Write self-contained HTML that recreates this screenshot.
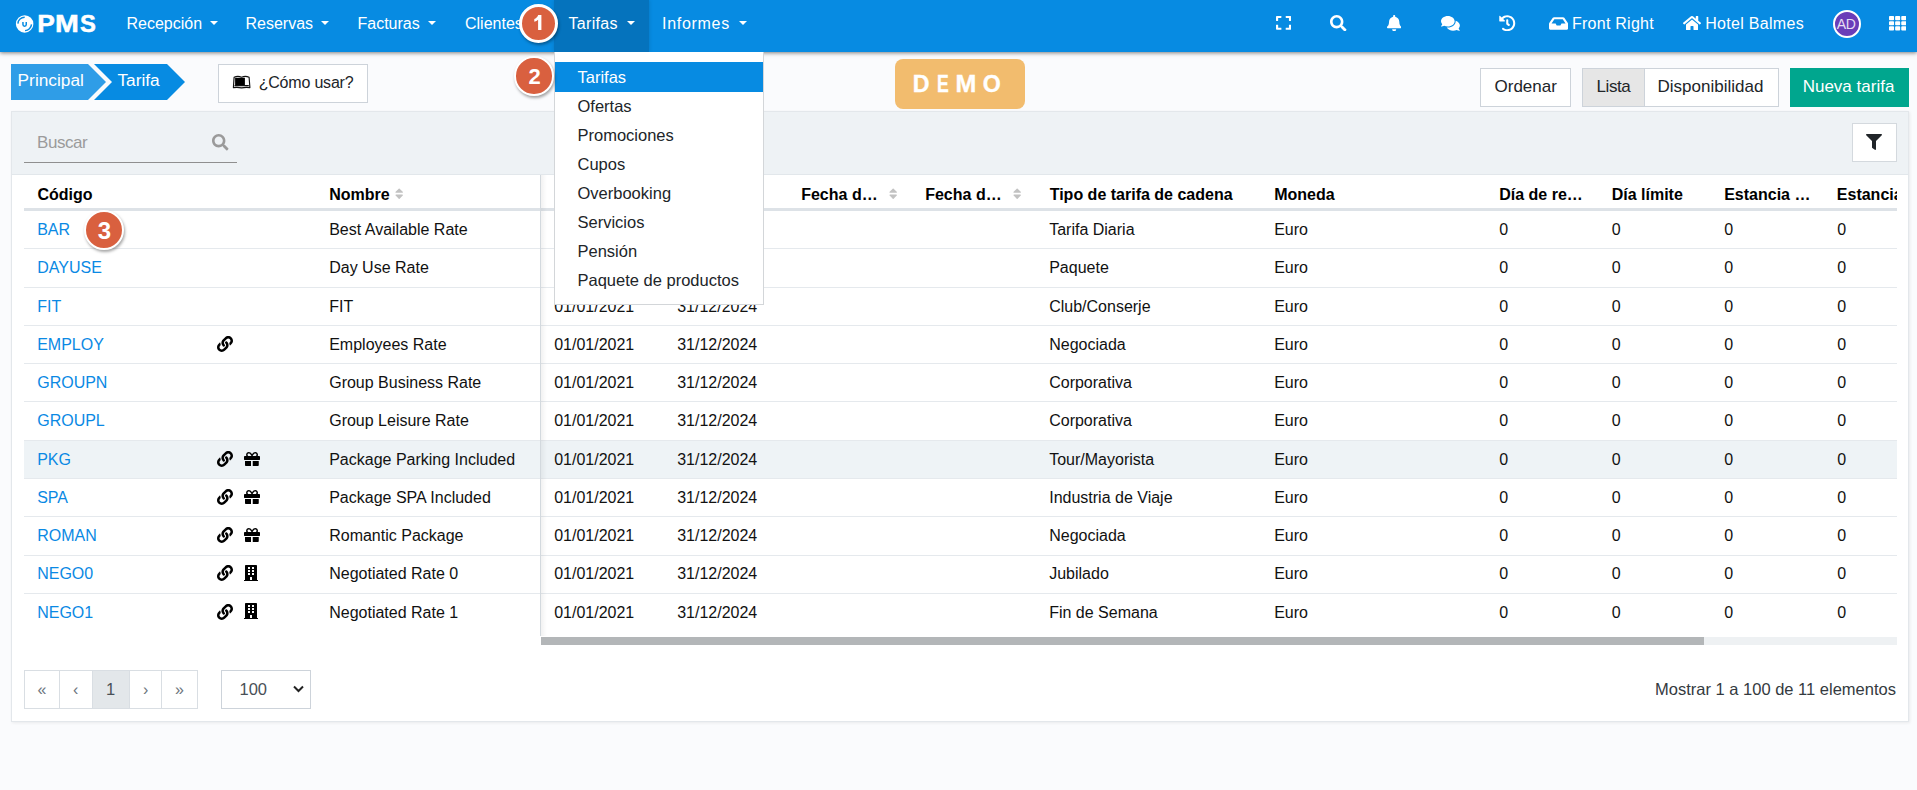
<!DOCTYPE html>
<html><head><meta charset="utf-8"><style>
html,body{margin:0;padding:0}
body{width:1917px;height:790px;overflow:hidden;position:relative;background:#fafbfd;font-family:"Liberation Sans", sans-serif}
.t{position:absolute;white-space:nowrap}
svg{display:block}
</style></head><body>
<div style="position:absolute;left:0;top:0;width:1917px;height:52px;background:#078be2;box-shadow:0 1px 4px rgba(0,0,0,.5)"></div>
<div style="position:absolute;left:554px;top:0;width:95px;height:52px;background:#0573bd;box-shadow:0 0 4px rgba(0,0,0,.15)"></div>
<svg style="position:absolute;left:15px;top:15px" width="19" height="19" viewBox="0 0 19 19">
<circle cx="9.65" cy="8.9" r="8.75" fill="#fff"/>
<path d="M2.9 8.6 A6.75 6.75 0 0 1 9.7 2.2" stroke="#078be2" stroke-width="1.45" fill="none"/>
<path d="M16.5 9.4 A6.75 6.75 0 0 1 10 15.6" stroke="#078be2" stroke-width="1.45" fill="none"/>
<path d="M7.95 6.9 V9.6 A1.65 1.65 0 0 0 11.25 9.6 V6.9" stroke="#078be2" stroke-width="1.5" fill="none"/>
</svg>
<div class="t" style="left:25.6px;top:12.28px;width:40px;text-align:center;font-size:24px;line-height:24px;font-weight:700;color:#fff;-webkit-text-stroke:0.5px #fff;transform:scaleX(1.1)">P</div>
<div class="t" style="left:47.05px;top:12.28px;width:40px;text-align:center;font-size:24px;line-height:24px;font-weight:700;color:#fff;-webkit-text-stroke:0.5px #fff;transform:scaleX(1.19)">M</div>
<div class="t" style="left:67.8px;top:12.28px;width:40px;text-align:center;font-size:24px;line-height:24px;font-weight:700;color:#fff;-webkit-text-stroke:0.5px #fff;transform:scaleX(0.99)">S</div>
<div class="t" style="left:126.50px;top:16.36px;font-size:16px;line-height:16px;color:#fff;font-weight:400;letter-spacing:0px;">Recepción</div>
<div style="position:absolute;left:210px;top:21px;width:0;height:0;border-left:4px solid transparent;border-right:4px solid transparent;border-top:4px solid #fff"></div>
<div class="t" style="left:245.50px;top:16.36px;font-size:16px;line-height:16px;color:#fff;font-weight:400;letter-spacing:0px;">Reservas</div>
<div style="position:absolute;left:321px;top:21px;width:0;height:0;border-left:4px solid transparent;border-right:4px solid transparent;border-top:4px solid #fff"></div>
<div class="t" style="left:357.50px;top:16.36px;font-size:16px;line-height:16px;color:#fff;font-weight:400;letter-spacing:0px;">Facturas</div>
<div style="position:absolute;left:428px;top:21px;width:0;height:0;border-left:4px solid transparent;border-right:4px solid transparent;border-top:4px solid #fff"></div>
<div class="t" style="left:465.00px;top:16.36px;font-size:16px;line-height:16px;color:#fff;font-weight:400;letter-spacing:0px;">Clientes</div>
<div style="position:absolute;left:536px;top:21px;width:0;height:0;border-left:4px solid transparent;border-right:4px solid transparent;border-top:4px solid #fff"></div>
<div class="t" style="left:568.50px;top:16.36px;font-size:16px;line-height:16px;color:#fff;font-weight:400;letter-spacing:0.3px;">Tarifas</div>
<div style="position:absolute;left:627px;top:21px;width:0;height:0;border-left:4px solid transparent;border-right:4px solid transparent;border-top:4px solid #fff"></div>
<div class="t" style="left:662.00px;top:16.36px;font-size:16px;line-height:16px;color:#fff;font-weight:400;letter-spacing:0.7px;">Informes</div>
<div style="position:absolute;left:738.8px;top:21px;width:0;height:0;border-left:4px solid transparent;border-right:4px solid transparent;border-top:4px solid #fff"></div>
<svg style="position:absolute;left:1276.20px;top:15.10px" width="15.10" height="15.77" viewBox="0 0 448 512" preserveAspectRatio="none"><path fill="#fff" d="M0 180V56c0-13.3 10.7-24 24-24h124c6.6 0 12 5.4 12 12v40c0 6.6-5.4 12-12 12H64v84c0 6.6-5.4 12-12 12H12c-6.6 0-12-5.4-12-12zM288 44v40c0 6.6 5.4 12 12 12h84v84c0 6.6 5.4 12 12 12h40c6.6 0 12-5.4 12-12V56c0-13.3-10.7-24-24-24H300c-6.6 0-12 5.4-12 12zm148 276h-40c-6.6 0-12 5.4-12 12v84h-84c-6.6 0-12 5.4-12 12v40c0 6.6 5.4 12 12 12h124c13.3 0 24-10.7 24-24V332c0-6.6-5.4-12-12-12zM160 468v-40c0-6.6-5.4-12-12-12H64v-84c0-6.6-5.4-12-12-12H12c-6.6 0-12 5.4-12 12v124c0 13.3 10.7 24 24 24h124c6.6 0 12-5.4 12-12z"/></svg>
<svg style="position:absolute;left:1330.20px;top:14.80px" width="16.50" height="16.50" viewBox="0 0 512 512"><path fill="#fff" d="M505 442.7L405.3 343c-4.5-4.5-10.6-7-17-7H372c27.6-35.3 44-79.7 44-128C416 93.1 322.9 0 208 0S0 93.1 0 208s93.1 208 208 208c48.3 0 92.7-16.4 128-44v16.3c0 6.4 2.5 12.5 7 17l99.7 99.7c9.4 9.4 24.6 9.4 33.9 0l28.3-28.3c9.4-9.4 9.4-24.6.1-34zM208 336c-70.7 0-128-57.2-128-128 0-70.7 57.2-128 128-128 70.7 0 128 57.2 128 128 0 70.7-57.2 128-128 128z"/></svg>
<svg style="position:absolute;left:1386.50px;top:14.90px" width="14.35" height="16.40" viewBox="0 0 448 512"><path fill="#fff" d="M224 512c35.32 0 63.970-28.65 63.97-64H160.03c0 35.35 28.65 64 63.97 64zm215.39-149.71c-19.32-20.76-55.47-51.99-55.47-154.29 0-77.7-54.48-139.9-127.94-155.16V32c0-17.67-14.32-32-31.98-32s-31.98 14.33-31.98 32v20.84C118.56 68.1 64.08 130.3 64.08 208c0 102.3-36.15 133.53-55.47 154.29-6 6.45-8.66 14.16-8.61 21.71.11 16.4 12.98 32 32.1 32h383.8c19.12 0 32-15.6 32.1-32 .05-7.55-2.61-15.27-8.61-21.71z"/></svg>
<svg style="position:absolute;left:1440.90px;top:14.80px" width="18.90" height="16.80" viewBox="0 0 576 512"><path fill="#fff" d="M416 192c0-88.4-93.1-160-208-160S0 103.6 0 192c0 34.3 14.1 65.9 38 92-13.4 30.2-35.5 54.2-35.8 54.5-2.2 2.3-2.8 5.700-1.5 8.7S4.8 352 8 352c36.6 0 66.9-12.3 88.7-25 32.2 15.7 70.3 25 111.3 25 114.9 0 208-71.6 208-160zm122 220c23.9-26 38-57.7 38-92 0-66.9-53.5-124.2-129.3-148.1.9 6.6 1.3 13.3 1.3 20.1 0 105.9-107.7 192-240 192-10.8 0-21.3-.8-31.7-1.9C207.8 439.6 281.8 480 368 480c41 0 79.1-9.2 111.3-25 21.8 12.7 52.1 25 88.7 25 3.2 0 6.1-1.9 7.3-4.8 1.3-2.9.7-6.300-1.5-8.7-.3-.3-22.4-24.2-35.8-54.5z"/></svg>
<svg style="position:absolute;left:1499.00px;top:14.60px" width="16.50" height="16.50" viewBox="0 0 512 512"><path fill="#fff" d="M504 255.531c.253 136.64-111.18 248.372-247.82 248.468-59.015.042-113.223-20.53-155.822-54.911-11.077-8.94-11.905-25.541-1.839-35.607l11.267-11.267c8.609-8.609 22.353-9.551 31.891-1.984C173.062 425.135 212.781 440 256 440c101.705 0 184-82.311 184-184 0-101.705-82.311-184-184-184-48.814 0-93.149 18.969-126.068 49.932l50.754 50.754c10.08 10.08 2.941 27.314-11.313 27.314H24c-8.837 0-16-7.163-16-16V38.627c0-14.254 17.234-21.393 27.314-11.314l49.372 49.372C129.209 34.136 189.552 8 256 8c136.81 0 247.747 110.78 248 247.531zm-180.912 78.784l9.823-12.63c8.138-10.463 6.253-25.542-4.21-33.679L288 256.349V152c0-13.255-10.745-24-24-24h-16c-13.255 0-24 10.745-24 24v135.651l65.409 50.874c10.463 8.137 25.541 6.253 33.679-4.21z"/></svg>
<svg style="position:absolute;left:1549.00px;top:14.80px" width="19.12" height="17.00" viewBox="0 0 576 512"><path fill="#fff" d="M567.938 243.908L462.25 85.374A48.003 48.003 0 0 0 422.311 64H153.689a48 48 0 0 0-39.938 21.374L8.062 243.908A47.994 47.994 0 0 0 0 270.533V400c0 26.51 21.49 48 48 48h480c26.51 0 48-21.49 48-48V270.533a47.994 47.994 0 0 0-8.062-26.625zM162.252 128h251.497l85.333 128H376l-32 64H232l-32-64H76.918l85.334-128z"/></svg>
<div class="t" style="left:1572.00px;top:16.06px;font-size:16px;line-height:16px;color:#fff;font-weight:400;letter-spacing:0.25px;">Front Right</div>
<svg style="position:absolute;left:1682.60px;top:14.80px" width="18.00" height="16.00" viewBox="0 0 576 512"><path fill="#fff" d="M280.37 148.26L96 300.11V464a16 16 0 0 0 16 16l112.06-.29a16 16 0 0 0 15.92-16V368a16 16 0 0 1 16-16h64a16 16 0 0 1 16 16v95.64a16 16 0 0 0 16 16.05L464 480a16 16 0 0 0 16-16V300L295.67 148.26a12.19 12.19 0 0 0-15.3 0zM571.6 251.47L488 182.56V44.05a12 12 0 0 0-12-12h-56a12 12 0 0 0-12 12v72.61L318.47 43a48 48 0 0 0-61 0L4.340 251.47a12 12 0 0 0-1.6 16.9l25.5 31A12 12 0 0 0 45.15 301l235.22-193.74a12.19 12.19 0 0 1 15.3 0L530.9 301a12 12 0 0 0 16.9-1.6l25.5-31a12 12 0 0 0-1.7-16.93z"/></svg>
<div class="t" style="left:1705.20px;top:16.06px;font-size:16px;line-height:16px;color:#fff;font-weight:400;letter-spacing:0.3px;">Hotel Balmes</div>
<div style="position:absolute;left:1832.5px;top:9.5px;width:24px;height:24px;border:2px solid #fff;border-radius:50%;background:#6a3db8"></div>
<div class="t" style="left:1836.80px;top:17.15px;font-size:14px;line-height:14px;color:#e6dff3;font-weight:400;letter-spacing:-0.5px;">AD</div>
<svg style="position:absolute;left:1889.00px;top:14.80px" width="17.30" height="16.50" viewBox="0 0 512 512" preserveAspectRatio="none"><path fill="#fff" d="M149.333 56v80c0 13.255-10.745 24-24 24H24c-13.255 0-24-10.745-24-24V56c0-13.255 10.745-24 24-24h101.333c13.255 0 24 10.745 24 24zm181.334 240v-80c0-13.255-10.745-24-24-24H205.333c-13.255 0-24 10.745-24 24v80c0 13.255 10.745 24 24 24h101.333c13.256 0 24.001-10.745 24.001-24zm32-240v80c0 13.255 10.745 24 24 24H488c13.255 0 24-10.745 24-24V56c0-13.255-10.745-24-24-24H386.667c-13.255 0-24 10.745-24 24zm-32 80V56c0-13.255-10.745-24-24-24H205.333c-13.255 0-24 10.745-24 24v80c0 13.255 10.745 24 24 24h101.333c13.256 0 24.001-10.745 24.001-24zm-205.334 56H24c-13.255 0-24 10.745-24 24v80c0 13.255 10.745 24 24 24h101.333c13.255 0 24-10.745 24-24v-80c0-13.255-10.745-24-24-24zM0 376v80c0 13.255 10.745 24 24 24h101.333c13.255 0 24-10.745 24-24v-80c0-13.255-10.745-24-24-24H24c-13.255 0-24 10.745-24 24zm386.667-56H488c13.255 0 24-10.745 24-24v-80c0-13.255-10.745-24-24-24H386.667c-13.255 0-24 10.745-24 24v80c0 13.255 10.745 24 24 24zm0 160H488c13.255 0 24-10.745 24-24v-80c0-13.255-10.745-24-24-24H386.667c-13.255 0-24 10.745-24 24v80c0 13.255 10.745 24 24 24zM181.333 376v80c0 13.255 10.745 24 24 24h101.333c13.255 0 24-10.745 24-24v-80c0-13.255-10.745-24-24-24H205.333c-13.255 0-24 10.745-24 24z"/></svg>
<svg style="position:absolute;left:11px;top:64px" width="176" height="36" viewBox="0 0 176 36"><path d="M0 0 H77 L95 18 L77 36 H0 Z" fill="#2f9de7"/><path d="M83 0 H156 L174 18 L156 36 H83 L101 18 Z" fill="#078be2"/></svg>
<div class="t" style="left:17.60px;top:72.26px;font-size:17.3px;line-height:17.3px;color:#fff;font-weight:400;">Principal</div>
<div class="t" style="left:117.40px;top:72.26px;font-size:17.3px;line-height:17.3px;color:#fff;font-weight:400;">Tarifa</div>
<div style="position:absolute;left:218px;top:64px;width:148px;height:36.5px;border:1px solid #cdd3da;background:#fff"></div>
<svg style="position:absolute;left:228px;top:70px" width="28" height="24" viewBox="0 0 28 24">
<rect x="7.1" y="7.8" width="9.8" height="7.2" fill="#000"/>
<path d="M5.4 17.6 L6.1 7.2 Q9.8 5.4 13.6 7.2 Q17.3 5.4 21.1 7.2 L21.9 17.6 Q17.6 16.9 13.6 17.9 Q9.6 16.9 5.4 17.6 Z M6.6 15.6 H20.8" fill="none" stroke="#111" stroke-width="1.15" stroke-linejoin="round"/>
</svg>
<div class="t" style="left:258.70px;top:75.06px;font-size:16px;line-height:16px;color:#212529;font-weight:400;letter-spacing:-0.2px;">¿Cómo usar?</div>
<div style="position:absolute;left:895px;top:59px;width:130px;height:50px;border-radius:8px;background:#f2bc6e"></div>
<div class="t" style="left:901.15px;top:72.76px;width:40px;text-align:center;font-size:23.2px;line-height:23.2px;font-weight:700;color:#fff;-webkit-text-stroke:0.35px #fff;transform:scaleX(1.0)">D</div>
<div class="t" style="left:922.55px;top:72.76px;width:40px;text-align:center;font-size:23.2px;line-height:23.2px;font-weight:700;color:#fff;-webkit-text-stroke:0.35px #fff;transform:scaleX(0.76)">E</div>
<div class="t" style="left:945.9px;top:72.76px;width:40px;text-align:center;font-size:23.2px;line-height:23.2px;font-weight:700;color:#fff;-webkit-text-stroke:0.35px #fff;transform:scaleX(1.08)">M</div>
<div class="t" style="left:971.8px;top:72.76px;width:40px;text-align:center;font-size:23.2px;line-height:23.2px;font-weight:700;color:#fff;-webkit-text-stroke:0.35px #fff;transform:scaleX(1.0)">O</div>
<div style="position:absolute;left:1480px;top:68px;width:89px;height:36.5px;border:1px solid #cdd3da;background:#fff"></div>
<div class="t" style="left:1494.50px;top:77.61px;font-size:17px;line-height:17px;color:#212529;font-weight:400;">Ordenar</div>
<div style="position:absolute;left:1582px;top:68px;width:195px;height:36.5px;border:1px solid #cdd3da;background:#fff"></div>
<div style="position:absolute;left:1583px;top:69px;width:61px;height:36.5px;background:#e6e6e6;border-right:1px solid #cdd3da"></div>
<div class="t" style="left:1596.50px;top:77.61px;font-size:17px;line-height:17px;color:#212529;font-weight:400;letter-spacing:-0.4px;">Lista</div>
<div class="t" style="left:1657.50px;top:77.61px;font-size:17px;line-height:17px;color:#212529;font-weight:400;">Disponibilidad</div>
<div style="position:absolute;left:1790px;top:68px;width:119px;height:39px;background:#00a68e"></div>
<div class="t" style="left:1802.70px;top:77.61px;font-size:17px;line-height:17px;color:#fff;font-weight:400;">Nueva tarifa</div>
<div style="position:absolute;left:11px;top:111px;width:1896px;height:609px;background:#fff;border:1px solid #e3e7eb;box-shadow:1px 1px 3px rgba(0,0,0,.07)"></div>
<div style="position:absolute;left:12px;top:112px;width:1896px;height:63px;background:#eef2f5;border-bottom:1px solid #e2e7eb;box-sizing:border-box"></div>
<div class="t" style="left:37.00px;top:133.91px;font-size:17px;line-height:17px;color:#9b9b9b;font-weight:400;letter-spacing:-0.45px;">Buscar</div>
<div style="position:absolute;left:24px;top:161.5px;width:213px;height:1.5px;background:#8f8f8f"></div>
<svg style="position:absolute;left:212.00px;top:134.00px" width="16.50" height="16.50" viewBox="0 0 512 512"><path fill="#9a9a9a" d="M505 442.7L405.3 343c-4.5-4.5-10.6-7-17-7H372c27.6-35.3 44-79.7 44-128C416 93.1 322.9 0 208 0S0 93.1 0 208s93.1 208 208 208c48.3 0 92.7-16.4 128-44v16.3c0 6.4 2.5 12.5 7 17l99.7 99.7c9.4 9.4 24.6 9.4 33.9 0l28.3-28.3c9.4-9.4 9.4-24.6.1-34zM208 336c-70.7 0-128-57.2-128-128 0-70.7 57.2-128 128-128 70.7 0 128 57.2 128 128 0 70.7-57.2 128-128 128z"/></svg>
<div style="position:absolute;left:1852px;top:123px;width:43px;height:37px;border:1px solid #d4d9de;background:#fff"></div>
<svg style="position:absolute;left:1866.00px;top:134.00px" width="16.00" height="16.00" viewBox="0 0 512 512"><path fill="#212529" d="M487.976 0H24.028C2.71 0-8.047 25.866 7.058 40.971L192 225.941V432c0 7.831 3.821 15.17 10.237 19.662l80 55.98C298.020 518.69 320 507.493 320 487.980V225.941l184.947-184.97C520.021 25.896 509.338 0 487.976 0z"/></svg>
<div style="position:absolute;left:24px;top:208px;width:1873px;height:3px;background:#dde2e7"></div>
<div class="t" style="left:37.40px;top:187.26px;font-size:16px;line-height:16px;color:#000;font-weight:700;">Código</div>
<div class="t" style="left:329.20px;top:187.26px;font-size:16px;line-height:16px;color:#000;font-weight:700;">Nombre</div>
<svg style="position:absolute;left:394.59px;top:186.91px" width="8.38" height="13.40" viewBox="0 0 320 512"><path fill="#c2c2c2" d="M41 288h238c21.4 0 32.1 25.9 17 41L177 448c-9.4 9.4-24.6 9.4-33.9 0L24 329c-15.1-15.1-4.4-41 17-41zm255-105L177 64c-9.4-9.4-24.6-9.4-33.9 0L24 183c-15.1 15.1-4.4 41 17 41h238c21.4 0 32.1-25.9 17-41z"/></svg>
<div class="t" style="left:554.20px;top:187.26px;font-size:16px;line-height:16px;color:#000;font-weight:700;">Fecha d…</div>
<div class="t" style="left:677.20px;top:187.26px;font-size:16px;line-height:16px;color:#000;font-weight:700;">Fecha d…</div>
<div class="t" style="left:801.20px;top:187.26px;font-size:16px;line-height:16px;color:#000;font-weight:700;">Fecha d…</div>
<svg style="position:absolute;left:888.79px;top:186.91px" width="8.38" height="13.40" viewBox="0 0 320 512"><path fill="#c2c2c2" d="M41 288h238c21.4 0 32.1 25.9 17 41L177 448c-9.4 9.4-24.6 9.4-33.9 0L24 329c-15.1-15.1-4.4-41 17-41zm255-105L177 64c-9.4-9.4-24.6-9.4-33.9 0L24 183c-15.1 15.1-4.4 41 17 41h238c21.4 0 32.1-25.9 17-41z"/></svg>
<div class="t" style="left:925.20px;top:187.26px;font-size:16px;line-height:16px;color:#000;font-weight:700;">Fecha d…</div>
<svg style="position:absolute;left:1012.89px;top:186.91px" width="8.38" height="13.40" viewBox="0 0 320 512"><path fill="#c2c2c2" d="M41 288h238c21.4 0 32.1 25.9 17 41L177 448c-9.4 9.4-24.6 9.4-33.9 0L24 329c-15.1-15.1-4.4-41 17-41zm255-105L177 64c-9.4-9.4-24.6-9.4-33.9 0L24 183c-15.1 15.1-4.4 41 17 41h238c21.4 0 32.1-25.9 17-41z"/></svg>
<div class="t" style="left:1049.70px;top:187.26px;font-size:16px;line-height:16px;color:#000;font-weight:700;">Tipo de tarifa de cadena</div>
<div class="t" style="left:1274.20px;top:187.26px;font-size:16px;line-height:16px;color:#000;font-weight:700;">Moneda</div>
<div class="t" style="left:1499.20px;top:187.26px;font-size:16px;line-height:16px;color:#000;font-weight:700;">Día de re…</div>
<div class="t" style="left:1611.70px;top:187.26px;font-size:16px;line-height:16px;color:#000;font-weight:700;">Día límite</div>
<div class="t" style="left:1724.20px;top:187.26px;font-size:16px;line-height:16px;color:#000;font-weight:700;">Estancia …</div>
<div style="position:absolute;left:1837px;top:180px;width:60px;height:28px;overflow:hidden"><div class="t" style="left:-0.20px;top:7.26px;font-size:16px;line-height:16px;color:#000;font-weight:700;">Estancia</div></div>
<div style="position:absolute;left:24px;top:211.00px;width:1873px;height:38.30px;box-sizing:border-box;background:#fff;border-bottom:1px solid #e5e9ed;"></div>
<div class="t" style="left:37.20px;top:222.00px;font-size:16px;line-height:16px;color:#0a89e4;font-weight:400;">BAR</div>
<div class="t" style="left:329.20px;top:222.00px;font-size:16px;line-height:16px;color:#111;font-weight:400;">Best Available Rate</div>
<div class="t" style="left:1049.20px;top:222.00px;font-size:16px;line-height:16px;color:#111;font-weight:400;">Tarifa Diaria</div>
<div class="t" style="left:1274.20px;top:222.00px;font-size:16px;line-height:16px;color:#111;font-weight:400;">Euro</div>
<div class="t" style="left:1499.20px;top:222.00px;font-size:16px;line-height:16px;color:#111;font-weight:400;">0</div>
<div class="t" style="left:1611.70px;top:222.00px;font-size:16px;line-height:16px;color:#111;font-weight:400;">0</div>
<div class="t" style="left:1724.20px;top:222.00px;font-size:16px;line-height:16px;color:#111;font-weight:400;">0</div>
<div class="t" style="left:1837.30px;top:222.00px;font-size:16px;line-height:16px;color:#111;font-weight:400;">0</div>
<div style="position:absolute;left:24px;top:249.30px;width:1873px;height:38.30px;box-sizing:border-box;background:#fff;border-bottom:1px solid #e5e9ed;"></div>
<div class="t" style="left:37.20px;top:260.00px;font-size:16px;line-height:16px;color:#0a89e4;font-weight:400;">DAYUSE</div>
<div class="t" style="left:329.20px;top:260.00px;font-size:16px;line-height:16px;color:#111;font-weight:400;">Day Use Rate</div>
<div class="t" style="left:1049.20px;top:260.00px;font-size:16px;line-height:16px;color:#111;font-weight:400;">Paquete</div>
<div class="t" style="left:1274.20px;top:260.00px;font-size:16px;line-height:16px;color:#111;font-weight:400;">Euro</div>
<div class="t" style="left:1499.20px;top:260.00px;font-size:16px;line-height:16px;color:#111;font-weight:400;">0</div>
<div class="t" style="left:1611.70px;top:260.00px;font-size:16px;line-height:16px;color:#111;font-weight:400;">0</div>
<div class="t" style="left:1724.20px;top:260.00px;font-size:16px;line-height:16px;color:#111;font-weight:400;">0</div>
<div class="t" style="left:1837.30px;top:260.00px;font-size:16px;line-height:16px;color:#111;font-weight:400;">0</div>
<div style="position:absolute;left:24px;top:287.60px;width:1873px;height:38.30px;box-sizing:border-box;background:#fff;border-bottom:1px solid #e5e9ed;"></div>
<div class="t" style="left:37.20px;top:299.00px;font-size:16px;line-height:16px;color:#0a89e4;font-weight:400;">FIT</div>
<div class="t" style="left:329.20px;top:299.00px;font-size:16px;line-height:16px;color:#111;font-weight:400;">FIT</div>
<div class="t" style="left:554.20px;top:299.00px;font-size:16px;line-height:16px;color:#111;font-weight:400;">01/01/2021</div>
<div class="t" style="left:677.20px;top:299.00px;font-size:16px;line-height:16px;color:#111;font-weight:400;">31/12/2024</div>
<div class="t" style="left:1049.20px;top:299.00px;font-size:16px;line-height:16px;color:#111;font-weight:400;">Club/Conserje</div>
<div class="t" style="left:1274.20px;top:299.00px;font-size:16px;line-height:16px;color:#111;font-weight:400;">Euro</div>
<div class="t" style="left:1499.20px;top:299.00px;font-size:16px;line-height:16px;color:#111;font-weight:400;">0</div>
<div class="t" style="left:1611.70px;top:299.00px;font-size:16px;line-height:16px;color:#111;font-weight:400;">0</div>
<div class="t" style="left:1724.20px;top:299.00px;font-size:16px;line-height:16px;color:#111;font-weight:400;">0</div>
<div class="t" style="left:1837.30px;top:299.00px;font-size:16px;line-height:16px;color:#111;font-weight:400;">0</div>
<div style="position:absolute;left:24px;top:325.90px;width:1873px;height:38.30px;box-sizing:border-box;background:#fff;border-bottom:1px solid #e5e9ed;"></div>
<div class="t" style="left:37.20px;top:337.00px;font-size:16px;line-height:16px;color:#0a89e4;font-weight:400;">EMPLOY</div>
<svg style="position:absolute;left:217.00px;top:335.60px" width="16.00" height="16.00" viewBox="0 0 512 512"><path fill="#000" d="M326.612 185.391c59.747 59.809 58.927 155.698.36 214.59-.11.12-.24.25-.36.37l-67.2 67.2c-59.27 59.27-155.699 59.262-214.96 0-59.27-59.26-59.27-155.7 0-214.96l37.106-37.106c9.84-9.84 26.786-3.3 27.294 10.606.648 17.722 3.826 35.527 9.69 52.721 1.986 5.822.567 12.262-3.783 16.612l-13.087 13.087c-28.026 28.026-28.905 73.66-1.155 101.96 28.024 28.579 74.086 28.749 102.325.51l67.2-67.19c28.191-28.191 28.073-73.757 0-101.83-3.701-3.694-7.429-6.564-10.341-8.569a16.037 16.037 0 0 1-6.947-12.606c-.396-10.567 3.348-21.456 11.698-29.806l21.054-21.055c5.521-5.521 14.182-6.199 20.584-1.731a152.482 152.482 0 0 1 20.522 17.197zM467.547 44.449c-59.261-59.262-155.69-59.27-214.96 0l-67.2 67.2c-.12.12-.25.25-.36.37-58.566 58.892-59.387 154.781.36 214.59a152.454 152.454 0 0 0 20.521 17.196c6.402 4.468 15.064 3.789 20.584-1.731l21.054-21.055c8.35-8.35 12.094-19.239 11.698-29.806a16.037 16.037 0 0 0-6.947-12.606c-2.912-2.005-6.64-4.875-10.341-8.569-28.073-28.073-28.191-73.639 0-101.83l67.2-67.19c28.239-28.239 74.3-28.069 102.325.51 27.75 28.3 26.872 73.934-1.155 101.96l-13.087 13.087c-4.35 4.35-5.769 10.79-3.783 16.612 5.864 17.194 9.042 34.999 9.69 52.721.509 13.906 17.454 20.446 27.294 10.606l37.106-37.106c59.271-59.259 59.271-155.699.001-214.959z"/></svg>
<div class="t" style="left:329.20px;top:337.00px;font-size:16px;line-height:16px;color:#111;font-weight:400;">Employees Rate</div>
<div class="t" style="left:554.20px;top:337.00px;font-size:16px;line-height:16px;color:#111;font-weight:400;">01/01/2021</div>
<div class="t" style="left:677.20px;top:337.00px;font-size:16px;line-height:16px;color:#111;font-weight:400;">31/12/2024</div>
<div class="t" style="left:1049.20px;top:337.00px;font-size:16px;line-height:16px;color:#111;font-weight:400;">Negociada</div>
<div class="t" style="left:1274.20px;top:337.00px;font-size:16px;line-height:16px;color:#111;font-weight:400;">Euro</div>
<div class="t" style="left:1499.20px;top:337.00px;font-size:16px;line-height:16px;color:#111;font-weight:400;">0</div>
<div class="t" style="left:1611.70px;top:337.00px;font-size:16px;line-height:16px;color:#111;font-weight:400;">0</div>
<div class="t" style="left:1724.20px;top:337.00px;font-size:16px;line-height:16px;color:#111;font-weight:400;">0</div>
<div class="t" style="left:1837.30px;top:337.00px;font-size:16px;line-height:16px;color:#111;font-weight:400;">0</div>
<div style="position:absolute;left:24px;top:364.20px;width:1873px;height:38.30px;box-sizing:border-box;background:#fff;border-bottom:1px solid #e5e9ed;"></div>
<div class="t" style="left:37.20px;top:375.00px;font-size:16px;line-height:16px;color:#0a89e4;font-weight:400;">GROUPN</div>
<div class="t" style="left:329.20px;top:375.00px;font-size:16px;line-height:16px;color:#111;font-weight:400;">Group Business Rate</div>
<div class="t" style="left:554.20px;top:375.00px;font-size:16px;line-height:16px;color:#111;font-weight:400;">01/01/2021</div>
<div class="t" style="left:677.20px;top:375.00px;font-size:16px;line-height:16px;color:#111;font-weight:400;">31/12/2024</div>
<div class="t" style="left:1049.20px;top:375.00px;font-size:16px;line-height:16px;color:#111;font-weight:400;">Corporativa</div>
<div class="t" style="left:1274.20px;top:375.00px;font-size:16px;line-height:16px;color:#111;font-weight:400;">Euro</div>
<div class="t" style="left:1499.20px;top:375.00px;font-size:16px;line-height:16px;color:#111;font-weight:400;">0</div>
<div class="t" style="left:1611.70px;top:375.00px;font-size:16px;line-height:16px;color:#111;font-weight:400;">0</div>
<div class="t" style="left:1724.20px;top:375.00px;font-size:16px;line-height:16px;color:#111;font-weight:400;">0</div>
<div class="t" style="left:1837.30px;top:375.00px;font-size:16px;line-height:16px;color:#111;font-weight:400;">0</div>
<div style="position:absolute;left:24px;top:402.50px;width:1873px;height:38.30px;box-sizing:border-box;background:#fff;border-bottom:1px solid #e5e9ed;"></div>
<div class="t" style="left:37.20px;top:413.00px;font-size:16px;line-height:16px;color:#0a89e4;font-weight:400;">GROUPL</div>
<div class="t" style="left:329.20px;top:413.00px;font-size:16px;line-height:16px;color:#111;font-weight:400;">Group Leisure Rate</div>
<div class="t" style="left:554.20px;top:413.00px;font-size:16px;line-height:16px;color:#111;font-weight:400;">01/01/2021</div>
<div class="t" style="left:677.20px;top:413.00px;font-size:16px;line-height:16px;color:#111;font-weight:400;">31/12/2024</div>
<div class="t" style="left:1049.20px;top:413.00px;font-size:16px;line-height:16px;color:#111;font-weight:400;">Corporativa</div>
<div class="t" style="left:1274.20px;top:413.00px;font-size:16px;line-height:16px;color:#111;font-weight:400;">Euro</div>
<div class="t" style="left:1499.20px;top:413.00px;font-size:16px;line-height:16px;color:#111;font-weight:400;">0</div>
<div class="t" style="left:1611.70px;top:413.00px;font-size:16px;line-height:16px;color:#111;font-weight:400;">0</div>
<div class="t" style="left:1724.20px;top:413.00px;font-size:16px;line-height:16px;color:#111;font-weight:400;">0</div>
<div class="t" style="left:1837.30px;top:413.00px;font-size:16px;line-height:16px;color:#111;font-weight:400;">0</div>
<div style="position:absolute;left:24px;top:440.80px;width:1873px;height:38.30px;box-sizing:border-box;background:#eef3f6;border-bottom:1px solid #e5e9ed;"></div>
<div class="t" style="left:37.20px;top:452.00px;font-size:16px;line-height:16px;color:#0a89e4;font-weight:400;">PKG</div>
<svg style="position:absolute;left:217.00px;top:450.50px" width="16.00" height="16.00" viewBox="0 0 512 512"><path fill="#000" d="M326.612 185.391c59.747 59.809 58.927 155.698.36 214.59-.11.12-.24.25-.36.37l-67.2 67.2c-59.27 59.27-155.699 59.262-214.96 0-59.27-59.26-59.27-155.7 0-214.96l37.106-37.106c9.84-9.84 26.786-3.3 27.294 10.606.648 17.722 3.826 35.527 9.69 52.721 1.986 5.822.567 12.262-3.783 16.612l-13.087 13.087c-28.026 28.026-28.905 73.66-1.155 101.96 28.024 28.579 74.086 28.749 102.325.51l67.2-67.19c28.191-28.191 28.073-73.757 0-101.83-3.701-3.694-7.429-6.564-10.341-8.569a16.037 16.037 0 0 1-6.947-12.606c-.396-10.567 3.348-21.456 11.698-29.806l21.054-21.055c5.521-5.521 14.182-6.199 20.584-1.731a152.482 152.482 0 0 1 20.522 17.197zM467.547 44.449c-59.261-59.262-155.69-59.27-214.96 0l-67.2 67.2c-.12.12-.25.25-.36.37-58.566 58.892-59.387 154.781.36 214.59a152.454 152.454 0 0 0 20.521 17.196c6.402 4.468 15.064 3.789 20.584-1.731l21.054-21.055c8.35-8.35 12.094-19.239 11.698-29.806a16.037 16.037 0 0 0-6.947-12.606c-2.912-2.005-6.64-4.875-10.341-8.569-28.073-28.073-28.191-73.639 0-101.83l67.2-67.19c28.239-28.239 74.3-28.069 102.325.51 27.75 28.3 26.872 73.934-1.155 101.96l-13.087 13.087c-4.35 4.35-5.769 10.79-3.783 16.612 5.864 17.194 9.042 34.999 9.69 52.721.509 13.906 17.454 20.446 27.294 10.606l37.106-37.106c59.271-59.259 59.271-155.699.001-214.959z"/></svg>
<svg style="position:absolute;left:244.00px;top:450.60px" width="16.00" height="16.00" viewBox="0 0 512 512"><path fill="#000" d="M32 448c0 17.7 14.3 32 32 32h160V320H32v128zm448-288h-42.1c6.2-12.1 10.1-25.5 10.1-40 0-48.5-39.5-88-88-88-41.6 0-68.5 21.3-103 68.3-34.5-47-61.4-68.3-103-68.3-48.5 0-88 39.5-88 88 0 14.5 3.8 27.9 10.1 40H32c-17.7 0-32 14.3-32 32v80c0 8.8 7.2 16 16 16h480c8.8 0 16-7.2 16-16v-80c0-17.7-14.3-32-32-32zm-326.1 0c-22.1 0-40-17.9-40-40s17.9-40 40-40c19.9 0 34.6 3.3 86.1 80h-86.1zm206.1 0h-86.1c51.4-76.5 65.7-80 86.1-80 22.1 0 40 17.9 40 40s-17.9 40-40 40zM280 480h160c17.7 0 32-14.3 32-32V320H280v160z"/></svg>
<div class="t" style="left:329.20px;top:452.00px;font-size:16px;line-height:16px;color:#111;font-weight:400;">Package Parking Included</div>
<div class="t" style="left:554.20px;top:452.00px;font-size:16px;line-height:16px;color:#111;font-weight:400;">01/01/2021</div>
<div class="t" style="left:677.20px;top:452.00px;font-size:16px;line-height:16px;color:#111;font-weight:400;">31/12/2024</div>
<div class="t" style="left:1049.20px;top:452.00px;font-size:16px;line-height:16px;color:#111;font-weight:400;">Tour/Mayorista</div>
<div class="t" style="left:1274.20px;top:452.00px;font-size:16px;line-height:16px;color:#111;font-weight:400;">Euro</div>
<div class="t" style="left:1499.20px;top:452.00px;font-size:16px;line-height:16px;color:#111;font-weight:400;">0</div>
<div class="t" style="left:1611.70px;top:452.00px;font-size:16px;line-height:16px;color:#111;font-weight:400;">0</div>
<div class="t" style="left:1724.20px;top:452.00px;font-size:16px;line-height:16px;color:#111;font-weight:400;">0</div>
<div class="t" style="left:1837.30px;top:452.00px;font-size:16px;line-height:16px;color:#111;font-weight:400;">0</div>
<div style="position:absolute;left:24px;top:479.10px;width:1873px;height:38.30px;box-sizing:border-box;background:#fff;border-bottom:1px solid #e5e9ed;"></div>
<div class="t" style="left:37.20px;top:490.00px;font-size:16px;line-height:16px;color:#0a89e4;font-weight:400;">SPA</div>
<svg style="position:absolute;left:217.00px;top:488.80px" width="16.00" height="16.00" viewBox="0 0 512 512"><path fill="#000" d="M326.612 185.391c59.747 59.809 58.927 155.698.36 214.59-.11.12-.24.25-.36.37l-67.2 67.2c-59.27 59.27-155.699 59.262-214.96 0-59.27-59.26-59.27-155.7 0-214.96l37.106-37.106c9.84-9.84 26.786-3.3 27.294 10.606.648 17.722 3.826 35.527 9.69 52.721 1.986 5.822.567 12.262-3.783 16.612l-13.087 13.087c-28.026 28.026-28.905 73.66-1.155 101.96 28.024 28.579 74.086 28.749 102.325.51l67.2-67.19c28.191-28.191 28.073-73.757 0-101.83-3.701-3.694-7.429-6.564-10.341-8.569a16.037 16.037 0 0 1-6.947-12.606c-.396-10.567 3.348-21.456 11.698-29.806l21.054-21.055c5.521-5.521 14.182-6.199 20.584-1.731a152.482 152.482 0 0 1 20.522 17.197zM467.547 44.449c-59.261-59.262-155.69-59.27-214.96 0l-67.2 67.2c-.12.12-.25.25-.36.37-58.566 58.892-59.387 154.781.36 214.59a152.454 152.454 0 0 0 20.521 17.196c6.402 4.468 15.064 3.789 20.584-1.731l21.054-21.055c8.35-8.35 12.094-19.239 11.698-29.806a16.037 16.037 0 0 0-6.947-12.606c-2.912-2.005-6.64-4.875-10.341-8.569-28.073-28.073-28.191-73.639 0-101.83l67.2-67.19c28.239-28.239 74.3-28.069 102.325.51 27.75 28.3 26.872 73.934-1.155 101.96l-13.087 13.087c-4.35 4.35-5.769 10.79-3.783 16.612 5.864 17.194 9.042 34.999 9.69 52.721.509 13.906 17.454 20.446 27.294 10.606l37.106-37.106c59.271-59.259 59.271-155.699.001-214.959z"/></svg>
<svg style="position:absolute;left:244.00px;top:488.90px" width="16.00" height="16.00" viewBox="0 0 512 512"><path fill="#000" d="M32 448c0 17.7 14.3 32 32 32h160V320H32v128zm448-288h-42.1c6.2-12.1 10.1-25.5 10.1-40 0-48.5-39.5-88-88-88-41.6 0-68.5 21.3-103 68.3-34.5-47-61.4-68.3-103-68.3-48.5 0-88 39.5-88 88 0 14.5 3.8 27.9 10.1 40H32c-17.7 0-32 14.3-32 32v80c0 8.8 7.2 16 16 16h480c8.8 0 16-7.2 16-16v-80c0-17.7-14.3-32-32-32zm-326.1 0c-22.1 0-40-17.9-40-40s17.9-40 40-40c19.9 0 34.6 3.3 86.1 80h-86.1zm206.1 0h-86.1c51.4-76.5 65.7-80 86.1-80 22.1 0 40 17.9 40 40s-17.9 40-40 40zM280 480h160c17.7 0 32-14.3 32-32V320H280v160z"/></svg>
<div class="t" style="left:329.20px;top:490.00px;font-size:16px;line-height:16px;color:#111;font-weight:400;">Package SPA Included</div>
<div class="t" style="left:554.20px;top:490.00px;font-size:16px;line-height:16px;color:#111;font-weight:400;">01/01/2021</div>
<div class="t" style="left:677.20px;top:490.00px;font-size:16px;line-height:16px;color:#111;font-weight:400;">31/12/2024</div>
<div class="t" style="left:1049.20px;top:490.00px;font-size:16px;line-height:16px;color:#111;font-weight:400;">Industria de Viaje</div>
<div class="t" style="left:1274.20px;top:490.00px;font-size:16px;line-height:16px;color:#111;font-weight:400;">Euro</div>
<div class="t" style="left:1499.20px;top:490.00px;font-size:16px;line-height:16px;color:#111;font-weight:400;">0</div>
<div class="t" style="left:1611.70px;top:490.00px;font-size:16px;line-height:16px;color:#111;font-weight:400;">0</div>
<div class="t" style="left:1724.20px;top:490.00px;font-size:16px;line-height:16px;color:#111;font-weight:400;">0</div>
<div class="t" style="left:1837.30px;top:490.00px;font-size:16px;line-height:16px;color:#111;font-weight:400;">0</div>
<div style="position:absolute;left:24px;top:517.40px;width:1873px;height:38.30px;box-sizing:border-box;background:#fff;border-bottom:1px solid #e5e9ed;"></div>
<div class="t" style="left:37.20px;top:528.00px;font-size:16px;line-height:16px;color:#0a89e4;font-weight:400;">ROMAN</div>
<svg style="position:absolute;left:217.00px;top:527.10px" width="16.00" height="16.00" viewBox="0 0 512 512"><path fill="#000" d="M326.612 185.391c59.747 59.809 58.927 155.698.36 214.59-.11.12-.24.25-.36.37l-67.2 67.2c-59.27 59.27-155.699 59.262-214.96 0-59.27-59.26-59.27-155.7 0-214.96l37.106-37.106c9.84-9.84 26.786-3.3 27.294 10.606.648 17.722 3.826 35.527 9.69 52.721 1.986 5.822.567 12.262-3.783 16.612l-13.087 13.087c-28.026 28.026-28.905 73.66-1.155 101.96 28.024 28.579 74.086 28.749 102.325.51l67.2-67.19c28.191-28.191 28.073-73.757 0-101.83-3.701-3.694-7.429-6.564-10.341-8.569a16.037 16.037 0 0 1-6.947-12.606c-.396-10.567 3.348-21.456 11.698-29.806l21.054-21.055c5.521-5.521 14.182-6.199 20.584-1.731a152.482 152.482 0 0 1 20.522 17.197zM467.547 44.449c-59.261-59.262-155.69-59.27-214.96 0l-67.2 67.2c-.12.12-.25.25-.36.37-58.566 58.892-59.387 154.781.36 214.59a152.454 152.454 0 0 0 20.521 17.196c6.402 4.468 15.064 3.789 20.584-1.731l21.054-21.055c8.35-8.35 12.094-19.239 11.698-29.806a16.037 16.037 0 0 0-6.947-12.606c-2.912-2.005-6.64-4.875-10.341-8.569-28.073-28.073-28.191-73.639 0-101.83l67.2-67.19c28.239-28.239 74.3-28.069 102.325.51 27.75 28.3 26.872 73.934-1.155 101.96l-13.087 13.087c-4.35 4.35-5.769 10.79-3.783 16.612 5.864 17.194 9.042 34.999 9.69 52.721.509 13.906 17.454 20.446 27.294 10.606l37.106-37.106c59.271-59.259 59.271-155.699.001-214.959z"/></svg>
<svg style="position:absolute;left:244.00px;top:527.20px" width="16.00" height="16.00" viewBox="0 0 512 512"><path fill="#000" d="M32 448c0 17.7 14.3 32 32 32h160V320H32v128zm448-288h-42.1c6.2-12.1 10.1-25.5 10.1-40 0-48.5-39.5-88-88-88-41.6 0-68.5 21.3-103 68.3-34.5-47-61.4-68.3-103-68.3-48.5 0-88 39.5-88 88 0 14.5 3.8 27.9 10.1 40H32c-17.7 0-32 14.3-32 32v80c0 8.8 7.2 16 16 16h480c8.8 0 16-7.2 16-16v-80c0-17.7-14.3-32-32-32zm-326.1 0c-22.1 0-40-17.9-40-40s17.9-40 40-40c19.9 0 34.6 3.3 86.1 80h-86.1zm206.1 0h-86.1c51.4-76.5 65.7-80 86.1-80 22.1 0 40 17.9 40 40s-17.9 40-40 40zM280 480h160c17.7 0 32-14.3 32-32V320H280v160z"/></svg>
<div class="t" style="left:329.20px;top:528.00px;font-size:16px;line-height:16px;color:#111;font-weight:400;">Romantic Package</div>
<div class="t" style="left:554.20px;top:528.00px;font-size:16px;line-height:16px;color:#111;font-weight:400;">01/01/2021</div>
<div class="t" style="left:677.20px;top:528.00px;font-size:16px;line-height:16px;color:#111;font-weight:400;">31/12/2024</div>
<div class="t" style="left:1049.20px;top:528.00px;font-size:16px;line-height:16px;color:#111;font-weight:400;">Negociada</div>
<div class="t" style="left:1274.20px;top:528.00px;font-size:16px;line-height:16px;color:#111;font-weight:400;">Euro</div>
<div class="t" style="left:1499.20px;top:528.00px;font-size:16px;line-height:16px;color:#111;font-weight:400;">0</div>
<div class="t" style="left:1611.70px;top:528.00px;font-size:16px;line-height:16px;color:#111;font-weight:400;">0</div>
<div class="t" style="left:1724.20px;top:528.00px;font-size:16px;line-height:16px;color:#111;font-weight:400;">0</div>
<div class="t" style="left:1837.30px;top:528.00px;font-size:16px;line-height:16px;color:#111;font-weight:400;">0</div>
<div style="position:absolute;left:24px;top:555.70px;width:1873px;height:38.30px;box-sizing:border-box;background:#fff;border-bottom:1px solid #e5e9ed;"></div>
<div class="t" style="left:37.20px;top:566.00px;font-size:16px;line-height:16px;color:#0a89e4;font-weight:400;">NEGO0</div>
<svg style="position:absolute;left:217.00px;top:565.40px" width="16.00" height="16.00" viewBox="0 0 512 512"><path fill="#000" d="M326.612 185.391c59.747 59.809 58.927 155.698.36 214.59-.11.12-.24.25-.36.37l-67.2 67.2c-59.27 59.27-155.699 59.262-214.96 0-59.27-59.26-59.27-155.7 0-214.96l37.106-37.106c9.84-9.84 26.786-3.3 27.294 10.606.648 17.722 3.826 35.527 9.69 52.721 1.986 5.822.567 12.262-3.783 16.612l-13.087 13.087c-28.026 28.026-28.905 73.66-1.155 101.96 28.024 28.579 74.086 28.749 102.325.51l67.2-67.19c28.191-28.191 28.073-73.757 0-101.83-3.701-3.694-7.429-6.564-10.341-8.569a16.037 16.037 0 0 1-6.947-12.606c-.396-10.567 3.348-21.456 11.698-29.806l21.054-21.055c5.521-5.521 14.182-6.199 20.584-1.731a152.482 152.482 0 0 1 20.522 17.197zM467.547 44.449c-59.261-59.262-155.69-59.27-214.96 0l-67.2 67.2c-.12.12-.25.25-.36.37-58.566 58.892-59.387 154.781.36 214.59a152.454 152.454 0 0 0 20.521 17.196c6.402 4.468 15.064 3.789 20.584-1.731l21.054-21.055c8.35-8.35 12.094-19.239 11.698-29.806a16.037 16.037 0 0 0-6.947-12.606c-2.912-2.005-6.64-4.875-10.341-8.569-28.073-28.073-28.191-73.639 0-101.83l67.2-67.19c28.239-28.239 74.3-28.069 102.325.51 27.75 28.3 26.872 73.934-1.155 101.96l-13.087 13.087c-4.35 4.35-5.769 10.79-3.783 16.612 5.864 17.194 9.042 34.999 9.69 52.721.509 13.906 17.454 20.446 27.294 10.606l37.106-37.106c59.271-59.259 59.271-155.699.001-214.959z"/></svg>
<svg style="position:absolute;left:244.00px;top:565.00px" width="14.00" height="16.00" viewBox="0 0 448 512"><path fill="#000" d="M436 480h-20V24c0-13.255-10.745-24-24-24H56C42.745 0 32 10.745 32 24v456H12c-6.627 0-12 5.373-12 12v20h448v-20c0-6.627-5.373-12-12-12zM128 76c0-6.627 5.373-12 12-12h40c6.627 0 12 5.373 12 12v40c0 6.627-5.373 12-12 12h-40c-6.627 0-12-5.373-12-12V76zm0 96c0-6.627 5.373-12 12-12h40c6.627 0 12 5.373 12 12v40c0 6.627-5.373 12-12 12h-40c-6.627 0-12-5.373-12-12v-40zm52 148h-40c-6.627 0-12-5.373-12-12v-40c0-6.627 5.373-12 12-12h40c6.627 0 12 5.373 12 12v40c0 6.627-5.373 12-12 12zm76 160h-64v-84c0-6.627 5.373-12 12-12h40c6.627 0 12 5.373 12 12v84zm64-172c0 6.627-5.373 12-12 12h-40c-6.627 0-12-5.373-12-12v-40c0-6.627 5.373-12 12-12h40c6.627 0 12 5.373 12 12v40zm0-96c0 6.627-5.373 12-12 12h-40c-6.627 0-12-5.373-12-12v-40c0-6.627 5.373-12 12-12h40c6.627 0 12 5.373 12 12v40zm0-96c0 6.627-5.373 12-12 12h-40c-6.627 0-12-5.373-12-12V76c0-6.627 5.373-12 12-12h40c6.627 0 12 5.373 12 12v40z"/></svg>
<div class="t" style="left:329.20px;top:566.00px;font-size:16px;line-height:16px;color:#111;font-weight:400;">Negotiated Rate 0</div>
<div class="t" style="left:554.20px;top:566.00px;font-size:16px;line-height:16px;color:#111;font-weight:400;">01/01/2021</div>
<div class="t" style="left:677.20px;top:566.00px;font-size:16px;line-height:16px;color:#111;font-weight:400;">31/12/2024</div>
<div class="t" style="left:1049.20px;top:566.00px;font-size:16px;line-height:16px;color:#111;font-weight:400;">Jubilado</div>
<div class="t" style="left:1274.20px;top:566.00px;font-size:16px;line-height:16px;color:#111;font-weight:400;">Euro</div>
<div class="t" style="left:1499.20px;top:566.00px;font-size:16px;line-height:16px;color:#111;font-weight:400;">0</div>
<div class="t" style="left:1611.70px;top:566.00px;font-size:16px;line-height:16px;color:#111;font-weight:400;">0</div>
<div class="t" style="left:1724.20px;top:566.00px;font-size:16px;line-height:16px;color:#111;font-weight:400;">0</div>
<div class="t" style="left:1837.30px;top:566.00px;font-size:16px;line-height:16px;color:#111;font-weight:400;">0</div>
<div style="position:absolute;left:24px;top:594.00px;width:1873px;height:38.30px;box-sizing:border-box;background:#fff;"></div>
<div class="t" style="left:37.20px;top:605.00px;font-size:16px;line-height:16px;color:#0a89e4;font-weight:400;">NEGO1</div>
<svg style="position:absolute;left:217.00px;top:603.70px" width="16.00" height="16.00" viewBox="0 0 512 512"><path fill="#000" d="M326.612 185.391c59.747 59.809 58.927 155.698.36 214.59-.11.12-.24.25-.36.37l-67.2 67.2c-59.27 59.27-155.699 59.262-214.96 0-59.27-59.26-59.27-155.7 0-214.96l37.106-37.106c9.84-9.84 26.786-3.3 27.294 10.606.648 17.722 3.826 35.527 9.69 52.721 1.986 5.822.567 12.262-3.783 16.612l-13.087 13.087c-28.026 28.026-28.905 73.66-1.155 101.96 28.024 28.579 74.086 28.749 102.325.51l67.2-67.19c28.191-28.191 28.073-73.757 0-101.83-3.701-3.694-7.429-6.564-10.341-8.569a16.037 16.037 0 0 1-6.947-12.606c-.396-10.567 3.348-21.456 11.698-29.806l21.054-21.055c5.521-5.521 14.182-6.199 20.584-1.731a152.482 152.482 0 0 1 20.522 17.197zM467.547 44.449c-59.261-59.262-155.69-59.27-214.96 0l-67.2 67.2c-.12.12-.25.25-.36.37-58.566 58.892-59.387 154.781.36 214.59a152.454 152.454 0 0 0 20.521 17.196c6.402 4.468 15.064 3.789 20.584-1.731l21.054-21.055c8.35-8.35 12.094-19.239 11.698-29.806a16.037 16.037 0 0 0-6.947-12.606c-2.912-2.005-6.64-4.875-10.341-8.569-28.073-28.073-28.191-73.639 0-101.83l67.2-67.19c28.239-28.239 74.3-28.069 102.325.51 27.75 28.3 26.872 73.934-1.155 101.96l-13.087 13.087c-4.35 4.35-5.769 10.79-3.783 16.612 5.864 17.194 9.042 34.999 9.69 52.721.509 13.906 17.454 20.446 27.294 10.606l37.106-37.106c59.271-59.259 59.271-155.699.001-214.959z"/></svg>
<svg style="position:absolute;left:244.00px;top:603.30px" width="14.00" height="16.00" viewBox="0 0 448 512"><path fill="#000" d="M436 480h-20V24c0-13.255-10.745-24-24-24H56C42.745 0 32 10.745 32 24v456H12c-6.627 0-12 5.373-12 12v20h448v-20c0-6.627-5.373-12-12-12zM128 76c0-6.627 5.373-12 12-12h40c6.627 0 12 5.373 12 12v40c0 6.627-5.373 12-12 12h-40c-6.627 0-12-5.373-12-12V76zm0 96c0-6.627 5.373-12 12-12h40c6.627 0 12 5.373 12 12v40c0 6.627-5.373 12-12 12h-40c-6.627 0-12-5.373-12-12v-40zm52 148h-40c-6.627 0-12-5.373-12-12v-40c0-6.627 5.373-12 12-12h40c6.627 0 12 5.373 12 12v40c0 6.627-5.373 12-12 12zm76 160h-64v-84c0-6.627 5.373-12 12-12h40c6.627 0 12 5.373 12 12v84zm64-172c0 6.627-5.373 12-12 12h-40c-6.627 0-12-5.373-12-12v-40c0-6.627 5.373-12 12-12h40c6.627 0 12 5.373 12 12v40zm0-96c0 6.627-5.373 12-12 12h-40c-6.627 0-12-5.373-12-12v-40c0-6.627 5.373-12 12-12h40c6.627 0 12 5.373 12 12v40zm0-96c0 6.627-5.373 12-12 12h-40c-6.627 0-12-5.373-12-12V76c0-6.627 5.373-12 12-12h40c6.627 0 12 5.373 12 12v40z"/></svg>
<div class="t" style="left:329.20px;top:605.00px;font-size:16px;line-height:16px;color:#111;font-weight:400;">Negotiated Rate 1</div>
<div class="t" style="left:554.20px;top:605.00px;font-size:16px;line-height:16px;color:#111;font-weight:400;">01/01/2021</div>
<div class="t" style="left:677.20px;top:605.00px;font-size:16px;line-height:16px;color:#111;font-weight:400;">31/12/2024</div>
<div class="t" style="left:1049.20px;top:605.00px;font-size:16px;line-height:16px;color:#111;font-weight:400;">Fin de Semana</div>
<div class="t" style="left:1274.20px;top:605.00px;font-size:16px;line-height:16px;color:#111;font-weight:400;">Euro</div>
<div class="t" style="left:1499.20px;top:605.00px;font-size:16px;line-height:16px;color:#111;font-weight:400;">0</div>
<div class="t" style="left:1611.70px;top:605.00px;font-size:16px;line-height:16px;color:#111;font-weight:400;">0</div>
<div class="t" style="left:1724.20px;top:605.00px;font-size:16px;line-height:16px;color:#111;font-weight:400;">0</div>
<div class="t" style="left:1837.30px;top:605.00px;font-size:16px;line-height:16px;color:#111;font-weight:400;">0</div>
<div style="position:absolute;left:540px;top:175px;width:1px;height:461px;background:#d3d9de"></div>
<div style="position:absolute;left:541px;top:175px;width:6px;height:461px;background:linear-gradient(to right, rgba(0,0,0,.05), rgba(0,0,0,0))"></div>
<div style="position:absolute;left:541px;top:637px;width:1356px;height:8px;background:#eef1f3"></div>
<div style="position:absolute;left:541px;top:637px;width:1163px;height:8px;background:#b3b6b8"></div>
<div style="position:absolute;left:24px;top:670px;width:172px;height:37px;border:1px solid #d9dee3;background:#fff"></div>
<div style="position:absolute;left:59px;top:670px;width:1px;height:39px;background:#d9dee3"></div>
<div style="position:absolute;left:92px;top:670px;width:1px;height:39px;background:#d9dee3"></div>
<div style="position:absolute;left:129px;top:670px;width:1px;height:39px;background:#d9dee3"></div>
<div style="position:absolute;left:161px;top:670px;width:1px;height:39px;background:#d9dee3"></div>
<div style="position:absolute;left:92.5px;top:671px;width:36.5px;height:37px;background:#e3e7ea"></div>
<div class="t" style="left:37.50px;top:682.46px;font-size:16px;line-height:16px;color:#6c757d;font-weight:400;">«</div>
<div class="t" style="left:73.00px;top:682.46px;font-size:16px;line-height:16px;color:#6c757d;font-weight:400;">‹</div>
<div class="t" style="left:106.00px;top:681.03px;font-size:16.5px;line-height:16.5px;color:#495057;font-weight:400;">1</div>
<div class="t" style="left:143.00px;top:682.46px;font-size:16px;line-height:16px;color:#6c757d;font-weight:400;">›</div>
<div class="t" style="left:175.00px;top:682.46px;font-size:16px;line-height:16px;color:#6c757d;font-weight:400;">»</div>
<div style="position:absolute;left:221px;top:670px;width:88px;height:37px;border:1px solid #cdd3da;background:#fff"></div>
<div class="t" style="left:239.50px;top:681.03px;font-size:16.5px;line-height:16.5px;color:#495057;font-weight:400;">100</div>
<svg style="position:absolute;left:292.5px;top:685px" width="11" height="8" viewBox="0 0 11 8"><path d="M1 1.5 L5.5 6 L10 1.5" stroke="#222" stroke-width="2" fill="none"/></svg>
<div class="t" style="left:1655.00px;top:680.63px;font-size:16.5px;line-height:16.5px;color:#343a40;font-weight:400;">Mostrar 1 a 100 de 11 elementos</div>
<div style="position:absolute;left:554px;top:52px;width:208px;height:252px;background:#fff;border:1px solid #d3d6d9;border-top:none"></div>
<div style="position:absolute;left:555px;top:62px;width:208px;height:29.7px;background:#078be2"></div>
<div class="t" style="left:577.50px;top:69.03px;font-size:16.5px;line-height:16.5px;color:#fff;font-weight:400;">Tarifas</div>
<div class="t" style="left:577.50px;top:98.03px;font-size:16.5px;line-height:16.5px;color:#212529;font-weight:400;">Ofertas</div>
<div class="t" style="left:577.50px;top:127.03px;font-size:16.5px;line-height:16.5px;color:#212529;font-weight:400;">Promociones</div>
<div class="t" style="left:577.50px;top:156.03px;font-size:16.5px;line-height:16.5px;color:#212529;font-weight:400;">Cupos</div>
<div class="t" style="left:577.50px;top:185.03px;font-size:16.5px;line-height:16.5px;color:#212529;font-weight:400;">Overbooking</div>
<div class="t" style="left:577.50px;top:214.03px;font-size:16.5px;line-height:16.5px;color:#212529;font-weight:400;">Servicios</div>
<div class="t" style="left:577.50px;top:243.03px;font-size:16.5px;line-height:16.5px;color:#212529;font-weight:400;">Pensión</div>
<div class="t" style="left:577.50px;top:272.03px;font-size:16.5px;line-height:16.5px;color:#212529;font-weight:400;">Paquete de productos</div>
<div style="position:absolute;left:518.70px;top:3.50px;width:33px;height:33px;border:3px solid #fff;border-radius:50%;background:#d9603f;box-shadow:1px 2px 3px rgba(0,0,0,.35)"></div>
<svg style="position:absolute;left:0;top:0" width="560" height="40"><path fill="#fff" d="M541.4 15 V30 H538.1 V19.7 C537.1 20.6 535.8 21.3 534.3 21.7 V19 C536 18.4 537.4 17 538.2 15 Z"/></svg>
<div style="position:absolute;left:514.45px;top:56.25px;width:35.5px;height:35.5px;border:2.5px solid #fff;border-radius:50%;background:#d9603f;box-shadow:1px 2px 3px rgba(0,0,0,.35)"></div><div class="t" style="left:528.58px;top:65.80px;font-size:22px;line-height:22px;color:#fff;font-weight:700;">2</div>
<div style="position:absolute;left:84.00px;top:209.90px;width:36px;height:36px;border:2.5px solid #fff;border-radius:50%;background:#d9603f;box-shadow:1px 2px 3px rgba(0,0,0,.35)"></div><div class="t" style="left:97.83px;top:218.72px;font-size:24px;line-height:24px;color:#fff;font-weight:700;">3</div>
</body></html>
